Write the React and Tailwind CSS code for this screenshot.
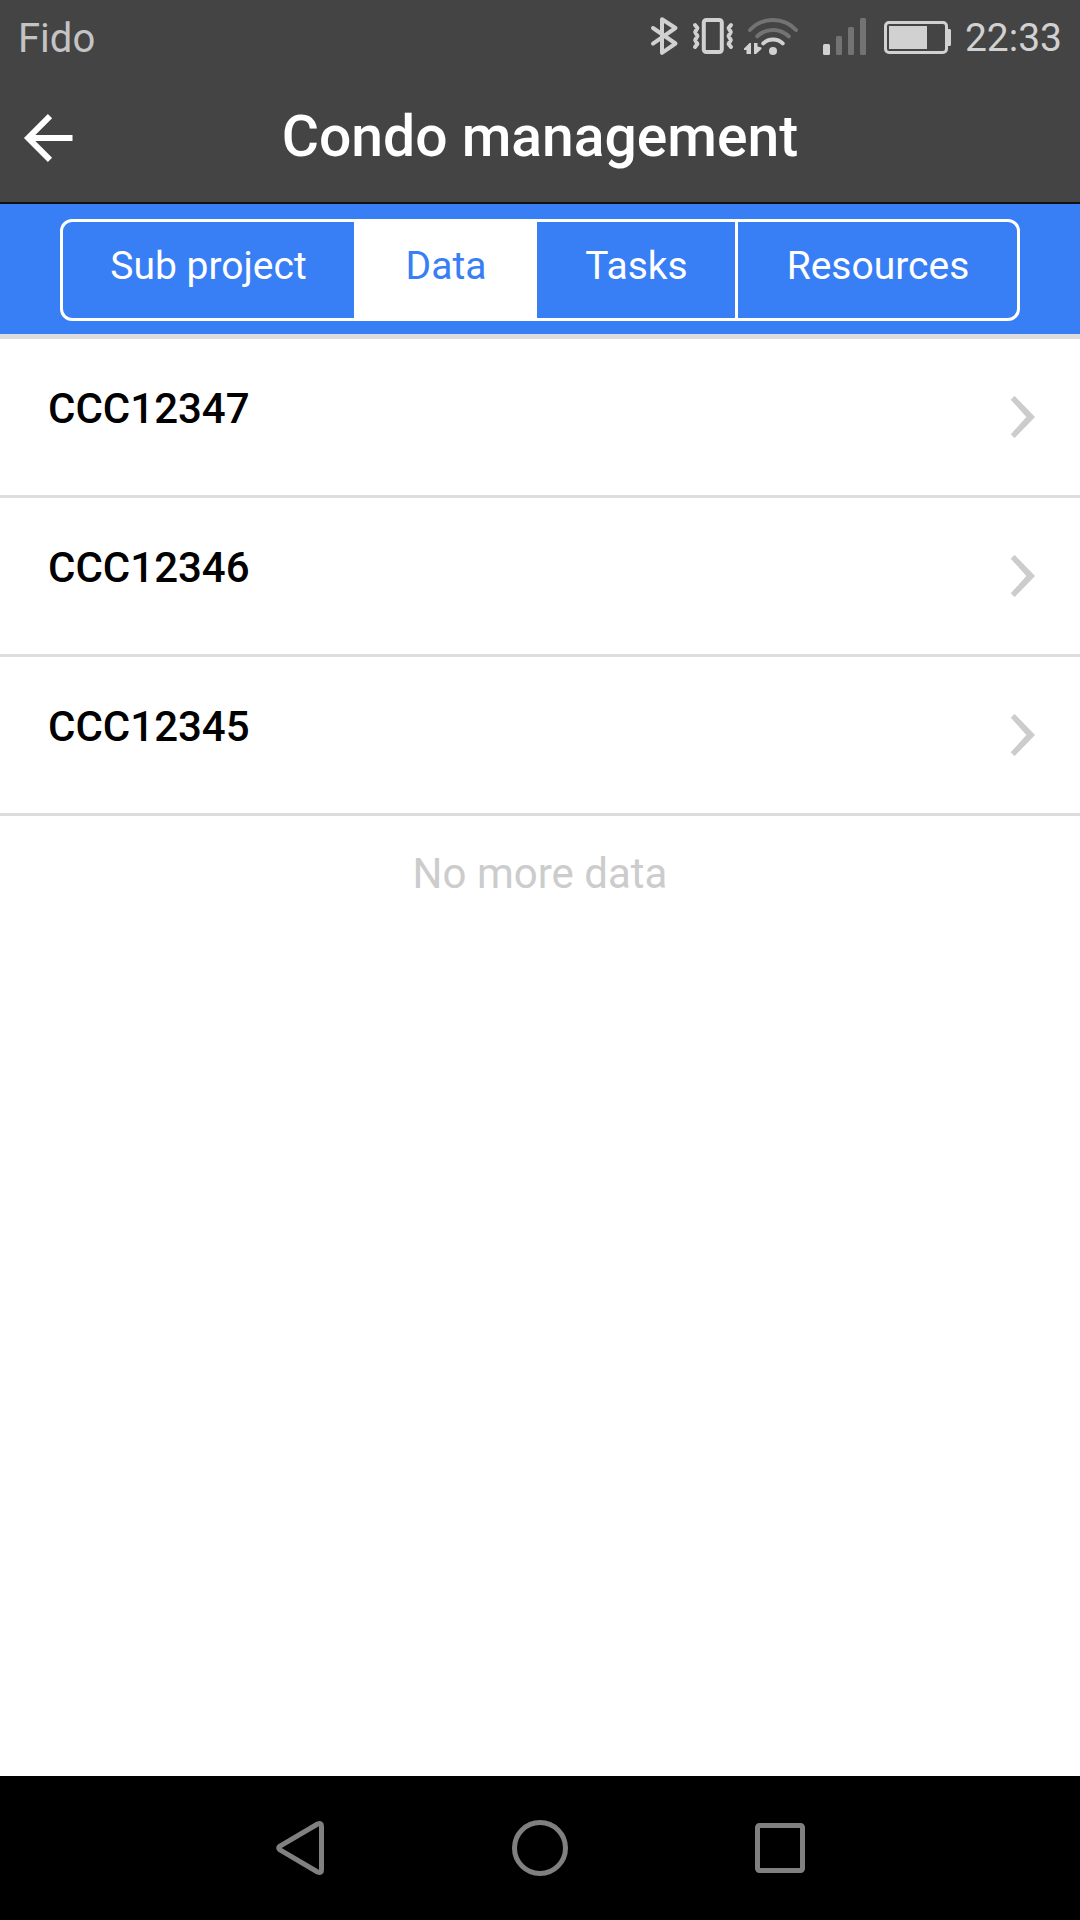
import React, { useState } from "react";

const tabs = [
  { id: "sub-project", text: "Sub project", width: "w-[294px]" },
  { id: "data", text: "Data", width: "w-[180px] pl-px" },
  { id: "tasks", text: "Tasks", width: "w-[201px] pl-px" },
  { id: "resources", text: "Resources", width: "w-[279px] pl-px" }
];

const rows = ["CCC12347", "CCC12346", "CCC12345"];

const StatusIcons = () => (
  <svg className="block w-[316px] h-[75px]" viewBox="640 0 316 75" fill="none">
    {/* Bluetooth */}
    <path
      d="M653 28L675.5 43.5L662 52.8V19.2L675.5 28L653 43.7"
      stroke="#d1d1d1"
      strokeWidth="4"
      strokeLinecap="round"
      strokeLinejoin="round"
    />
    {/* Vibrate */}
    <rect x="703.8" y="20" width="18" height="32" rx="2.5" stroke="#d1d1d1" strokeWidth="4" />
    <path
      d="M695 25L697.4 28L695.2 32L697.4 36L695.2 40L697.4 44L695 47M731 25L728.6 28L730.8 32L728.6 36L730.8 40L728.6 44L731 47"
      stroke="#d1d1d1"
      strokeWidth="4"
      strokeLinecap="round"
      strokeLinejoin="round"
    />
    {/* Wifi */}
    <g strokeWidth="4" strokeLinecap="round">
      <path d="M750 30A31.6 31.6 0 0 1 796 30" stroke="#737373" />
      <path d="M757.3 36.3A22.5 22.5 0 0 1 788.7 36.3" stroke="#737373" />
      <path d="M763.3 43.4A14.2 14.2 0 0 1 782.7 43.4" stroke="#d1d1d1" />
    </g>
    <circle cx="773" cy="51" r="4" fill="#d1d1d1" />
    <path d="M744 48.5L749.5 43H751V54H746.5V50H744ZM754 43H757.5V46.5L761.5 47.5V49L756 54H754Z" fill="#d1d1d1" />
    {/* Signal */}
    <rect x="823" y="44" width="7" height="11" rx="1.5" fill="#d1d1d1" />
    <rect x="836" y="36" width="6" height="19" rx="1.5" fill="#737373" />
    <rect x="848" y="27" width="6" height="28" rx="1.5" fill="#737373" />
    <rect x="860" y="18" width="6" height="37" rx="1.5" fill="#737373" />
    {/* Battery */}
    <rect x="885.5" y="22.5" width="61" height="30" rx="3.5" stroke="#d1d1d1" strokeWidth="3" />
    <rect x="889" y="26" width="38" height="23" fill="#d1d1d1" />
    <path d="M948 29H950L951 30V45L950 46H948Z" fill="#d1d1d1" />
  </svg>
);

const App = () => {
  const [activeTab, setActiveTab] = useState("data");

  return (
    <div className="w-[1080px] h-[1920px] flex flex-col bg-white overflow-hidden font-['Roboto',sans-serif]">
      {/* Status bar */}
      <div className="h-[75px] shrink-0 flex justify-between bg-[#444444] text-[#d1d1d1] text-[39px] leading-[75px]">
        <span className="pl-[18px] pt-px text-[40px] text-[#c4c4c4]">Fido</span>
        <div className="flex pr-[18px]">
          <StatusIcons />
          <span className="pl-[9px] pt-px">22:33</span>
        </div>
      </div>

      {/* Header */}
      <header className="h-[129px] shrink-0 grid grid-cols-[120px_1fr_120px] bg-[#444444] border-b-2 border-[#111111] text-white">
        <button className="pl-[23px] pt-[39px] flex items-start">
          <svg className="block w-[50px] h-12" viewBox="23 114 50 48" fill="none" stroke="#fff" strokeWidth="6">
            <path d="M50 116.2L28.2 138L50 159.8M30 138H72.5" />
          </svg>
        </button>
        <h1 className="text-center text-[57px] font-medium leading-[124px]">Condo management</h1>
      </header>

      {/* Tabs */}
      <div className="h-[135px] shrink-0 px-[60px] pt-[15px] bg-[#387ef5] border-b-5 border-[#dddddd]">
        <div className="h-[102px] flex rounded-[12px] border-3 border-white overflow-hidden">
          {tabs.map((tab) => (
            <button
              key={tab.id}
              onClick={() => setActiveTab(tab.id)}
              className={`${tab.width} shrink-0 border-r-3 last:border-r-0 border-white text-[39px] leading-[88px] pb-[8px] ${
                activeTab === tab.id ? "bg-white text-[#387ef5]" : "text-white"
              }`}
            >
              {tab.text}
            </button>
          ))}
        </div>
      </div>

      {/* List */}
      <main className="flex-1">
        {rows.map((row) => (
          <div key={row} className="h-[159px] flex justify-between pl-12 pr-[45px] border-b-3 border-[#dddddd]">
            <span className="text-[42px] font-medium leading-[140px] text-black">{row}</span>
            <svg className="block w-[25px] h-11 mt-[56px]" viewBox="1010 395 25 44" fill="none">
              <path
                d="M1014.5 396.2L1034.6 417L1014.5 437.8L1011.2 434.3L1026.8 417L1011.2 399.7Z"
                fill="#cccccc"
                stroke="#cccccc"
                strokeWidth="0.8"
                strokeLinejoin="round"
              />
            </svg>
          </div>
        ))}
        <p className="text-center text-[42px] leading-[115px] text-[#cccccc]">No more data</p>
      </main>

      {/* Android navigation */}
      <nav className="h-36 shrink-0 flex items-center justify-center gap-[187px] bg-black">
        <svg className="block w-[49px] h-14" viewBox="276 1820 49 56" fill="none" stroke="#808080" strokeWidth="5" strokeLinejoin="round">
          <path d="M280 1846.2L317.6 1824Q321.5 1822.2 321.5 1826V1870Q321.5 1873.8 317.6 1872L280 1849.8Q277.3 1848 280 1846.2Z" />
        </svg>
        <svg className="block w-14 h-14" viewBox="0 0 56 56" fill="none" stroke="#808080" strokeWidth="5">
          <circle cx="28" cy="28" r="25.5" />
        </svg>
        <svg className="block w-[50px] h-[50px]" viewBox="0 0 50 50" fill="none" stroke="#808080" strokeWidth="5">
          <rect x="2.5" y="2.5" width="45" height="45" rx="2" />
        </svg>
      </nav>
    </div>
  );
};

export default App;
